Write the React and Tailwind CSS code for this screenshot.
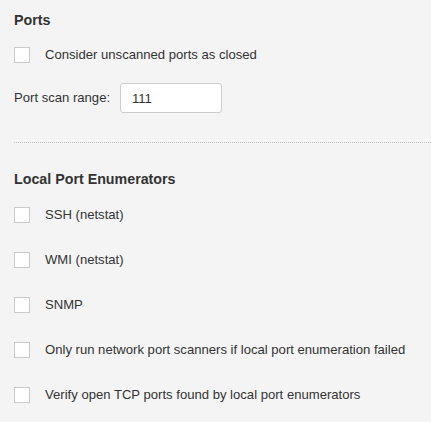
import React from 'react';

const Box = ({ label }) => (
  <label className="flex items-center gap-[15px] text-[13.1px] leading-4 text-[#333]">
    <span className="w-4 h-4 shrink-0 bg-white border border-[#cacaca]" />
    <span>{label}</span>
  </label>
);

export default function App() {
  return (
    <div className="min-h-[422px] bg-[#f4f4f4] pl-[14px] pt-[10px] pb-4 overflow-hidden" style={{ fontFamily: '"Liberation Sans", Arial, sans-serif' }}>
      {/* Ports */}
      <h2 className="text-[14.25px] leading-5 font-bold text-[#333]">Ports</h2>
      <div className="mt-[17px]">
        <Box label="Consider unscanned ports as closed" />
      </div>
      <div className="mt-[20px] flex items-center text-[13.1px] text-[#333]">
        <span className="w-[106px]">Port scan range:</span>
        <input
          type="text"
          defaultValue="111"
          className="w-[102px] h-[30px] px-[11px] bg-white border border-[#cccccc] rounded-[3px] text-[13.1px] text-[#333] outline-none"
        />
      </div>

      <div className="mt-[29px] border-t border-dotted border-[#c4c4c4]" />

      {/* Local Port Enumerators */}
      <h2 className="mt-[26px] text-[14.25px] leading-5 font-bold text-[#333]">Local Port Enumerators</h2>
      <div className="mt-[18px] flex flex-col gap-[29px]">
        <Box label="SSH (netstat)" />
        <Box label="WMI (netstat)" />
        <Box label="SNMP" />
        <Box label="Only run network port scanners if local port enumeration failed" />
        <Box label="Verify open TCP ports found by local port enumerators" />
      </div>
    </div>
  );
}
